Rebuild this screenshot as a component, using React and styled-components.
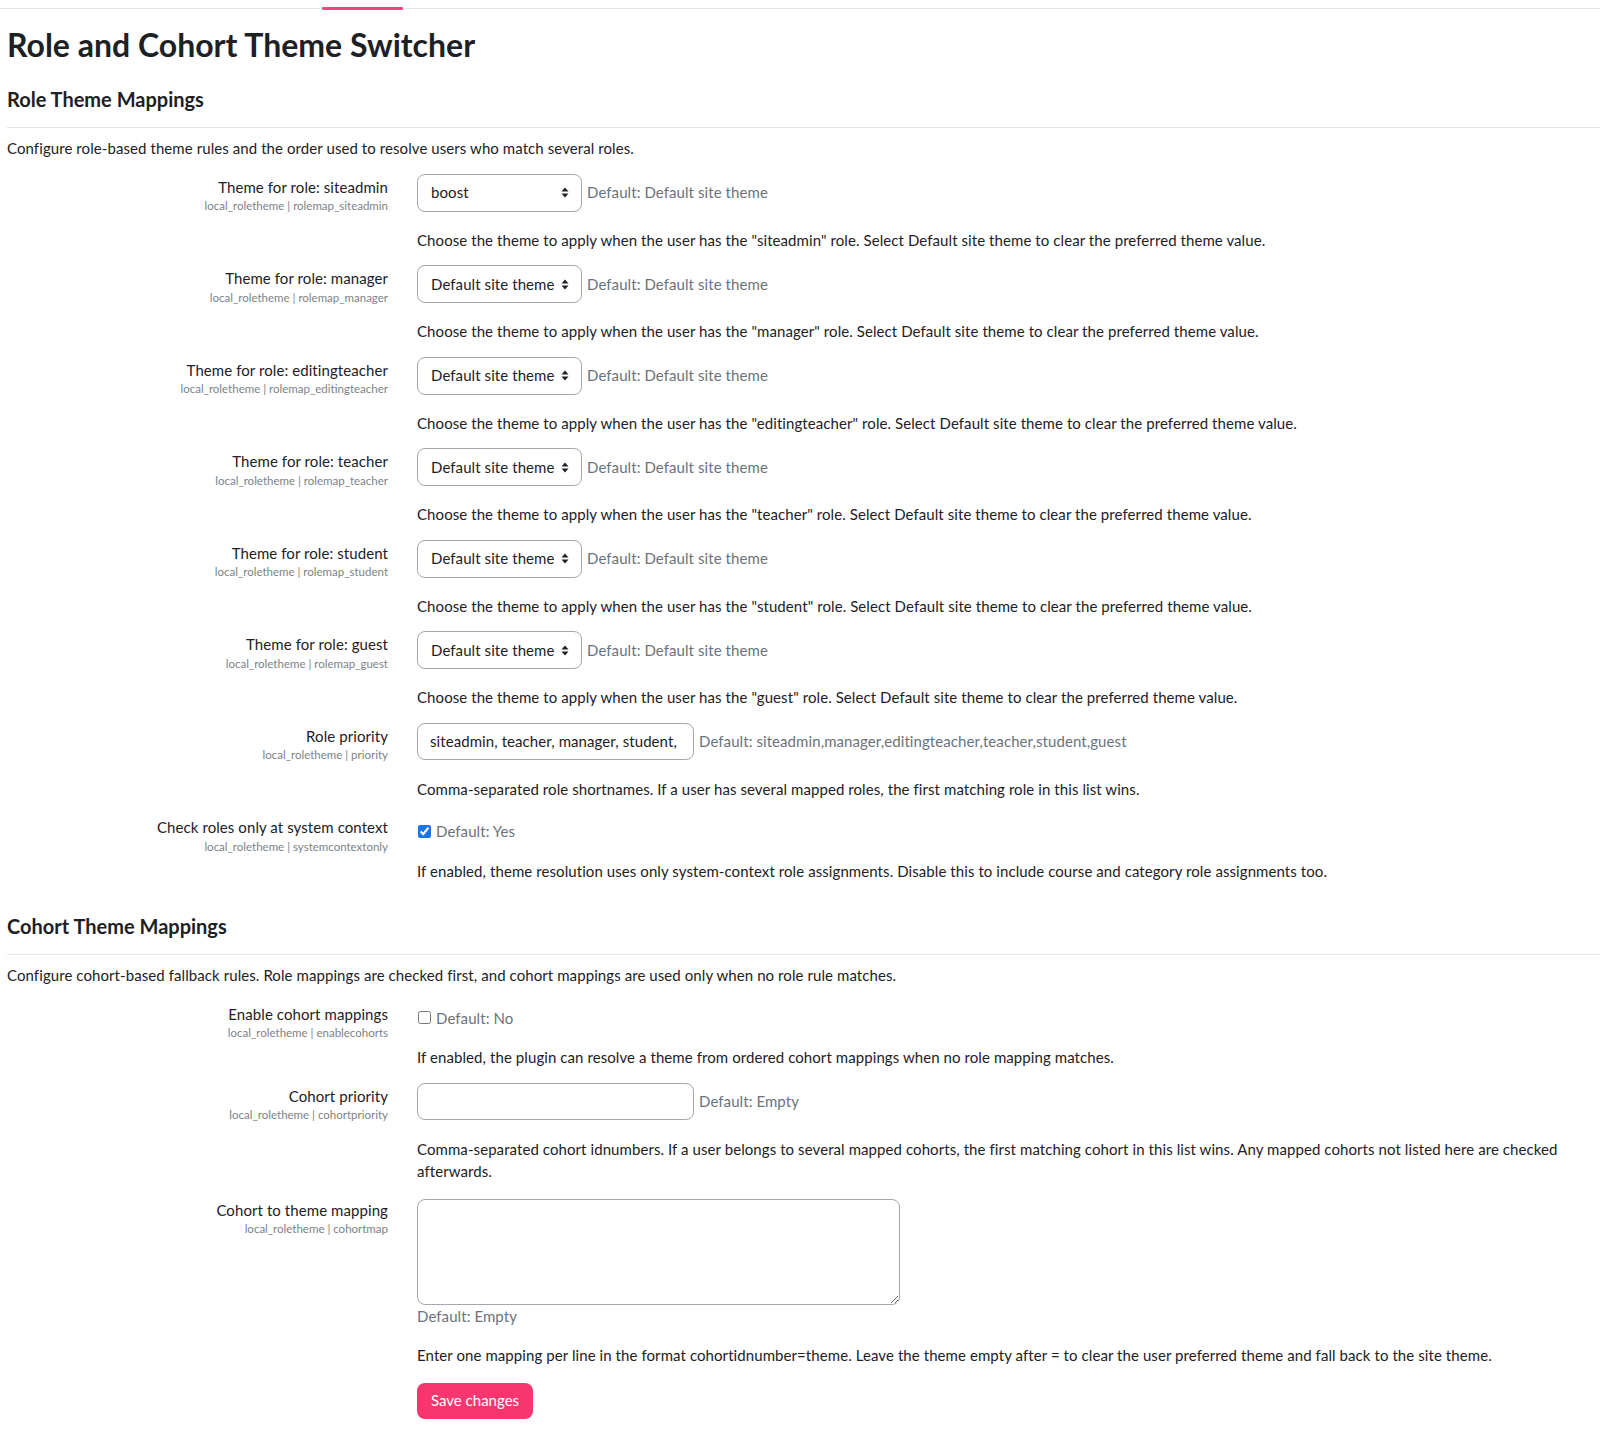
import React from "react";
import styled, { createGlobalStyle } from "styled-components";

const GlobalStyle = createGlobalStyle`
  html, body {
    margin: 0;
    padding: 0;
    background: #ffffff;
  }
  body {
    font-family: "Lato", "Liberation Sans", sans-serif;
    font-size: 15px;
    line-height: 22.5px;
    letter-spacing: 0.08px;
    color: #1d2125;
  }
  * { box-sizing: border-box; }
`;

const Page = styled.div`
  padding: 0 15px 40px 7px;
`;

const TabStrip = styled.nav`
  display: flex;
  align-items: flex-end;
  height: 9px;
  margin-left: -7px;
  margin-right: -15px;
  padding-left: 322px;
  border-bottom: 1px solid #e3e5e8;
`;

const ActiveTab = styled.span`
  display: block;
  width: 81px;
  height: 3px;
  margin-bottom: -2px;
  background: #f0457a;
  border-radius: 1px;
`;

const Title = styled.h2`
  margin: 17px 0 0;
  font-size: 32px;
  line-height: 38px;
  font-weight: 700;
  letter-spacing: 0;
`;

const Section = styled.section`
  margin-top: ${(p) => (p.$first ? "24px" : "33px")};
`;

const SectionHeading = styled.h3`
  margin: 0;
  font-size: 20px;
  line-height: 22px;
  font-weight: 700;
  letter-spacing: 0;
`;

const Rule = styled.hr`
  margin: 17px -15px 9px 0;
  border: 0;
  border-top: 1px solid #e3e5e8;
`;

const Intro = styled.div`
  margin-bottom: 14px;
`;

const SettingRow = styled.div`
  display: grid;
  grid-template-columns: 395px 1fr;
  margin-bottom: 14px;
`;

const LabelCell = styled.div`
  padding: 2px 14px 0 0;
  text-align: right;
`;

const LabelText = styled.div`
  line-height: 22.5px;
`;

const ShortName = styled.div`
  font-size: 11.5px;
  line-height: 15px;
  letter-spacing: 0;
  color: #7b8389;
`;

const ControlCell = styled.div`
  padding-left: 15px;
`;

const ControlLine = styled.div`
  display: flex;
  align-items: center;
  gap: 5px;
  padding-top: ${(p) => (p.$check ? "6px" : "0")};
  min-height: ${(p) => (p.$check ? "28.5px" : "38px")};
`;

const SelectBox = styled.div`
  display: flex;
  align-items: center;
  justify-content: space-between;
  width: 165px;
  height: 38px;
  padding: 0 12px 0 13px;
  border: 1px solid #a3a8ae;
  border-radius: 8px;
  background: #fff;
`;

const TextBox = styled.div`
  flex: none;
  width: ${(p) => p.$width || 277}px;
  height: 37px;
  padding: 0 12px;
  display: flex;
  align-items: center;
  border: 1px solid #a3a8ae;
  border-radius: 8px;
  background: #fff;
`;

const TextValue = styled.span`
  display: block;
  width: 100%;
  overflow: hidden;
  white-space: nowrap;
`;

const TextArea = styled.textarea`
  display: block;
  width: 483px;
  height: 106px;
  margin-top: 2px;
  border: 1px solid #a3a8ae;
  border-radius: 8px;
  font: inherit;
  padding: 6px 12px;
`;

const DefaultNote = styled.span`
  color: #6a737b;
`;

const CheckLabel = styled.label`
  display: flex;
  align-items: center;
  gap: 5px;
  color: #6a737b;
`;

const CheckBox = styled.input`
  width: 13px;
  height: 13px;
  margin: 0 0 0 1px;
  accent-color: #1a73e8;
`;

const Description = styled.div`
  margin-top: 17px;
`;

const SaveButton = styled.button`
  margin-top: 16px;
  height: 36px;
  padding: 0 14px;
  border: 0;
  border-radius: 8px;
  background: #f7356f;
  color: #fff;
  font: inherit;
  cursor: pointer;
`;

const SortArrows = () => (
  <svg width="8" height="11" viewBox="0 0 8 11" aria-hidden="true">
    <path d="M4 0.5 L7.5 4.5 H0.5 Z" fill="#1d2125" />
    <path d="M4 10.5 L7.5 6.5 H0.5 Z" fill="#1d2125" />
  </svg>
);

const roles = [
  { name: "siteadmin", value: "boost" },
  { name: "manager", value: "Default site theme" },
  { name: "editingteacher", value: "Default site theme" },
  { name: "teacher", value: "Default site theme" },
  { name: "student", value: "Default site theme" },
  { name: "guest", value: "Default site theme" },
];

const Label = ({ text, short }) => (
  <LabelCell>
    <LabelText>{text}</LabelText>
    <ShortName>local_roletheme | {short}</ShortName>
  </LabelCell>
);

export default function App() {
  return (
    <Page>
      <GlobalStyle />
      <TabStrip>
        <ActiveTab />
      </TabStrip>
      <Title>Role and Cohort Theme Switcher</Title>

      <Section $first>
        <SectionHeading>Role Theme Mappings</SectionHeading>
        <Rule />
        <Intro>
          Configure role-based theme rules and the order used to resolve users who match several roles.
        </Intro>

        {roles.map((r) => (
          <SettingRow key={r.name}>
            <Label text={`Theme for role: ${r.name}`} short={`rolemap_${r.name}`} />
            <ControlCell>
              <ControlLine>
                <SelectBox>
                  <span>{r.value}</span>
                  <SortArrows />
                </SelectBox>
                <DefaultNote>Default: Default site theme</DefaultNote>
              </ControlLine>
              <Description>
                Choose the theme to apply when the user has the "{r.name}" role. Select Default site theme to clear the preferred theme value.
              </Description>
            </ControlCell>
          </SettingRow>
        ))}

        <SettingRow>
          <Label text="Role priority" short="priority" />
          <ControlCell>
            <ControlLine>
              <TextBox>
                <TextValue>siteadmin, teacher, manager, student,</TextValue>
              </TextBox>
              <DefaultNote>Default: siteadmin,manager,editingteacher,teacher,student,guest</DefaultNote>
            </ControlLine>
            <Description>
              Comma-separated role shortnames. If a user has several mapped roles, the first matching role in this list wins.
            </Description>
          </ControlCell>
        </SettingRow>

        <SettingRow>
          <Label text="Check roles only at system context" short="systemcontextonly" />
          <ControlCell>
            <ControlLine $check>
              <CheckLabel>
                <CheckBox type="checkbox" defaultChecked />
                Default: Yes
              </CheckLabel>
            </ControlLine>
            <Description>
              If enabled, theme resolution uses only system-context role assignments. Disable this to include course and category role assignments too.
            </Description>
          </ControlCell>
        </SettingRow>
      </Section>

      <Section>
        <SectionHeading>Cohort Theme Mappings</SectionHeading>
        <Rule />
        <Intro>
          Configure cohort-based fallback rules. Role mappings are checked first, and cohort mappings are used only when no role rule matches.
        </Intro>

        <SettingRow>
          <Label text="Enable cohort mappings" short="enablecohorts" />
          <ControlCell>
            <ControlLine $check>
              <CheckLabel>
                <CheckBox type="checkbox" />
                Default: No
              </CheckLabel>
            </ControlLine>
            <Description>
              If enabled, the plugin can resolve a theme from ordered cohort mappings when no role mapping matches.
            </Description>
          </ControlCell>
        </SettingRow>

        <SettingRow>
          <Label text="Cohort priority" short="cohortpriority" />
          <ControlCell>
            <ControlLine>
              <TextBox>
                <TextValue />
              </TextBox>
              <DefaultNote>Default: Empty</DefaultNote>
            </ControlLine>
            <Description>
              Comma-separated cohort idnumbers. If a user belongs to several mapped cohorts, the first matching cohort in this list wins. Any mapped cohorts not listed here are checked afterwards.
            </Description>
          </ControlCell>
        </SettingRow>

        <SettingRow>
          <Label text="Cohort to theme mapping" short="cohortmap" />
          <ControlCell>
            <TextArea />
            <DefaultNote>Default: Empty</DefaultNote>
            <Description>
              Enter one mapping per line in the format cohortidnumber=theme. Leave the theme empty after = to clear the user preferred theme and fall back to the site theme.
            </Description>
            <SaveButton type="button">Save changes</SaveButton>
          </ControlCell>
        </SettingRow>
      </Section>
    </Page>
  );
}
